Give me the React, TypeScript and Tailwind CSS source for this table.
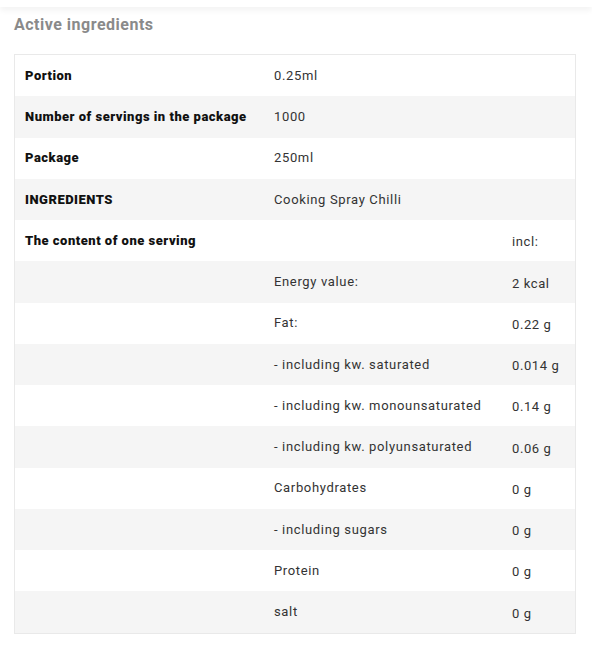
import React from 'react'

const rows: { label?: string; name?: string; value?: string }[] = [
  { label: 'Portion', name: '0.25ml' },
  { label: 'Number of servings in the package', name: '1000' },
  { label: 'Package', name: '250ml' },
  { label: 'INGREDIENTS', name: 'Cooking Spray Chilli' },
  { label: 'The content of one serving', value: 'incl:' },
  { name: 'Energy value:', value: '2 kcal' },
  { name: 'Fat:', value: '0.22 g' },
  { name: '- including kw. saturated', value: '0.014 g' },
  { name: '- including kw. monounsaturated', value: '0.14 g' },
  { name: '- including kw. polyunsaturated', value: '0.06 g' },
  { name: 'Carbohydrates', value: '0 g' },
  { name: '- including sugars', value: '0 g' },
  { name: 'Protein', value: '0 g' },
  { name: 'salt', value: '0 g' },
]

export default function App() {
  return (
    <div className="w-[592px] h-[647px] bg-white overflow-hidden font-['Roboto',sans-serif]">
      {/* shadow of the block above */}
      <div className="h-[7px] bg-white shadow-[0_3px_6px_rgba(0,0,0,0.06)]" />

      <div className="px-[14px]">
        <h3 className="mt-[8px] text-[16px] font-bold leading-[19px] tracking-[0.5px] text-[#8a8a8a]">
          Active ingredients
        </h3>

        <div className="mt-[20px] w-[562px] border border-[#e9e9e9]">
          <table className="w-full border-collapse">
            <colgroup>
              <col className="w-[249px]" />
              <col className="w-[237px]" />
              <col />
            </colgroup>
            <tbody>
              {rows.map((row, i) => (
                <tr key={i} className={`h-[41.25px] ${i % 2 === 1 ? 'bg-[#f5f5f5]' : 'bg-white'}`}>
                  <td className="pl-[10px] text-[13px] font-black tracking-[0.5px] text-[#111] align-middle">
                    {row.label}
                  </td>
                  <td className="pl-[10px] text-[13px] tracking-[0.65px] text-[#333] align-middle">
                    {row.name}
                  </td>
                  <td className="pl-[11px] text-[13px] tracking-[0.6px] text-[#333] align-middle pt-[3px]">
                    {row.value}
                  </td>
                </tr>
              ))}
            </tbody>
          </table>
        </div>
      </div>
    </div>
  )
}
